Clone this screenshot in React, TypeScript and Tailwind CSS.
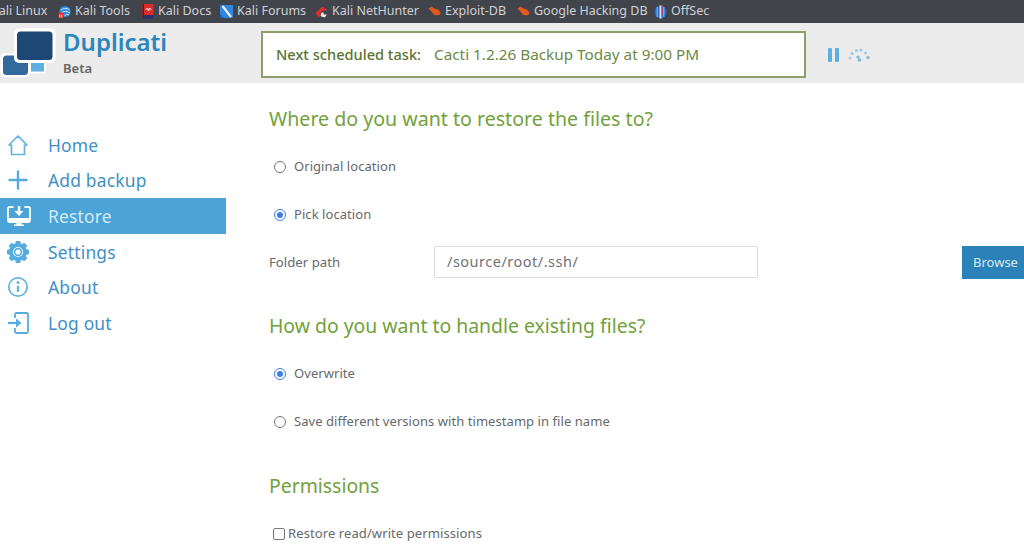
import type { ReactNode } from 'react';

const fontStack = "font-['Noto_Sans','Open_Sans',sans-serif]";

function KaliToolsIcon() {
  return (
    <svg width="14" height="14" viewBox="0 0 14 14">
      <circle cx="7.5" cy="6.5" r="6" fill="#2f8be0" />
      <path d="M3 5 Q7 1.5 12.5 4.5 M3.5 8 Q8 4.5 13 8 M7 11 Q9 8.5 12 10" stroke="#d5e6f7" strokeWidth="1" fill="none" />
      <rect x="0.5" y="7.5" width="5.5" height="6" rx="1" fill="#e0342f" />
      <path d="M2 13 V10 M4 13 V10" stroke="#fff" strokeWidth="0.7" />
    </svg>
  );
}

function KaliDocsIcon() {
  return (
    <svg width="12" height="15" viewBox="0 0 12 15">
      <rect x="0.5" y="0" width="11" height="14" rx="1" fill="#d92b2b" />
      <rect x="0.5" y="11" width="11" height="3.5" fill="#27306a" />
      <rect x="0.5" y="0" width="1.5" height="14" fill="#7a1414" />
      <path d="M3.5 6 L5.5 4 L6.5 7 L7.5 4 L9.5 6" stroke="#fff" strokeWidth="0.9" fill="none" />
    </svg>
  );
}

function KaliForumsIcon() {
  return (
    <svg width="13" height="13" viewBox="0 0 13 13">
      <rect width="13" height="13" rx="1" fill="#2f86e0" />
      <path d="M2.5 1 L11 12" stroke="#eef0f2" strokeWidth="2.2" />
      <path d="M0 9 L4 13 H0 Z" fill="#1c5fb0" />
    </svg>
  );
}

function NetHunterIcon() {
  return (
    <svg width="14" height="14" viewBox="0 0 14 14">
      <path d="M0.5 8 L8 1 L13.5 5 L9 5.5 Q5 7 6 11 L4 13 Z" fill="#d92f33" />
      <path d="M6 11 Q7 13 11 12.5 L13 9.5 Q9 11 9 7.5 L7 7.5 Z" fill="#e8e8e8" />
    </svg>
  );
}

function ExploitIcon() {
  return (
    <svg width="13" height="11" viewBox="0 0 13 11">
      <path d="M0.5 2.5 L3.5 0.5 L6.5 2.5 L10 3.5 L12.5 6.5 L12 8.5 L9 9.5 L5.5 8.5 L3.5 5.5 Z" fill="#e2591f" />
    </svg>
  );
}

function OffSecIcon() {
  return (
    <svg width="13" height="14" viewBox="0 0 13 14">
      <ellipse cx="6.5" cy="7" rx="6" ry="6.5" fill="#2b62c4" />
      <path d="M5.5 0.5 H7.5 V13.5 H5.5 Z" fill="#dfe3ec" />
      <path d="M2.5 2 H4 V12 H2.5 Z M9 2 H10.5 V12 H9 Z" fill="#57b0e8" />
      <path d="M7.5 0.5 H9 V9 L7.5 11 Z" fill="#9a4a8f" />
    </svg>
  );
}

function BookmarkItem({ icon, label, className }: { icon?: ReactNode; label: string; className: string }) {
  return (
    <div className={`flex items-center gap-[4px] shrink-0 ${className}`}>
      {icon && <span className="w-[13px] flex items-center justify-center">{icon}</span>}
      <span>{label}</span>
    </div>
  );
}

function DuplicatiLogo() {
  return (
    <svg width="56" height="56" viewBox="0 0 56 56" className="block">
      <rect x="0.5" y="30" width="30" height="24" rx="5" fill="#fff" />
      <rect x="3" y="32.5" width="25" height="19.5" rx="3.5" fill="#336a9e" />
      <rect x="29" y="38" width="17" height="12.5" rx="2" fill="#fff" />
      <rect x="31" y="40" width="13" height="8.5" fill="#5fb0e0" />
      <rect x="14" y="5.5" width="41.5" height="34.5" rx="5" fill="#fff" />
      <rect x="17" y="8.5" width="35.5" height="28.5" rx="3.5" fill="#1d4775" />
    </svg>
  );
}

function HomeIcon() {
  return (
    <svg width="24" height="24" viewBox="0 0 24 24" fill="none">
      <path d="M3 12 L12 3 L21 12 H18.5 V21.5 H5.5 V12 Z" stroke="#63b2e0" strokeWidth="1.7" strokeLinejoin="round" />
    </svg>
  );
}

function AddIcon() {
  return (
    <svg width="24" height="24" viewBox="0 0 24 24" fill="none">
      <path d="M12 3.5 V20.5 M3.5 12 H20.5" stroke="#56acdf" strokeWidth="2.4" strokeLinecap="round" />
    </svg>
  );
}

function RestoreIcon() {
  return (
    <svg width="26" height="26" viewBox="0 0 26 26" fill="none">
      <path d="M7.5 4 H3.5 A1.5 1.5 0 0 0 2 5.5 V17.5 A1.5 1.5 0 0 0 3.5 19 H22.5 A1.5 1.5 0 0 0 24 17.5 V5.5 A1.5 1.5 0 0 0 22.5 4 H18.5" stroke="#fff" strokeWidth="1.8" />
      <path d="M2.5 15 H23.5 V18.5 H2.5 Z" fill="#fff" />
      <path d="M13 3 V11" stroke="#fff" strokeWidth="2.4" />
      <path d="M8.5 8 H17.5 L13 13 Z" fill="#fff" />
      <path d="M10.5 19 H15.5 V21.5 H18 V23 H8 V21.5 H10.5 Z" fill="#fff" />
    </svg>
  );
}

function GearIcon() {
  return (
    <svg width="24" height="24" viewBox="0 0 24 24">
      <g fill="#56acdf">
        {[0, 45, 90, 135, 180, 225, 270, 315].map((a) => (
          <rect key={a} x="9.5" y="1" width="5" height="5" rx="1" transform={`rotate(${a} 12 12)`} />
        ))}
      </g>
      <circle cx="12" cy="12" r="7" fill="none" stroke="#56acdf" strokeWidth="4" />
      <circle cx="12" cy="12" r="3.4" fill="none" stroke="#56acdf" strokeWidth="1.6" />
    </svg>
  );
}

function InfoIcon() {
  return (
    <svg width="24" height="24" viewBox="0 0 24 24" fill="none">
      <circle cx="12" cy="12" r="9.2" stroke="#63b2e0" strokeWidth="1.7" />
      <circle cx="12" cy="7.6" r="1.5" fill="#63b2e0" />
      <path d="M12 10.8 V17" stroke="#63b2e0" strokeWidth="2.3" />
    </svg>
  );
}

function LogOutIcon() {
  return (
    <svg width="24" height="24" viewBox="0 0 24 24" fill="none">
      <path d="M9 7 V3.5 A1.5 1.5 0 0 1 10.5 2 H20.5 A1.5 1.5 0 0 1 22 3.5 V20.5 A1.5 1.5 0 0 1 20.5 22 H10.5 A1.5 1.5 0 0 1 9 20.5 V17" stroke="#56acdf" strokeWidth="1.8" />
      <path d="M2 12 H11" stroke="#56acdf" strokeWidth="2.2" />
      <path d="M10 7.5 L15.5 12 L10 16.5 Z" fill="#56acdf" />
    </svg>
  );
}

function SpinnerDots() {
  const dots = [
    [3, 11, 1.6, 0.45],
    [5, 6.5, 1.6, 0.5],
    [9.5, 3.5, 1.5, 0.55],
    [14, 3, 1.5, 0.55],
    [18.5, 6, 1.5, 0.5],
    [21, 10.5, 1.7, 0.7],
    [11, 10, 1.6, 0.8],
    [12.5, 13, 1.8, 0.8],
  ];
  return (
    <svg width="24" height="16" viewBox="0 0 24 16">
      {dots.map(([cx, cy, r, o], i) => (
        <circle key={i} cx={cx} cy={cy} r={r} fill="#5fa9d8" opacity={o} />
      ))}
    </svg>
  );
}

function NavItem({ icon, label, active }: { icon: ReactNode; label: string; active?: boolean }) {
  return (
    <div className={`flex items-center h-[35.6px] ${active ? 'bg-[#4ba3d8] text-[#d4ebf7]' : 'text-[#3f8fc4]'}`}>
      <span className="w-[48px] pl-[6px] flex items-center shrink-0">{icon}</span>
      <span className="text-[17.4px] tracking-[0.2px]">{label}</span>
    </div>
  );
}

function Radio({ label, checked, className }: { label: string; checked?: boolean; className: string }) {
  return (
    <div className={`flex items-center text-[13px] tracking-[0.06px] text-[#66696c] ${className}`}>
      <span className={`w-[12px] h-[12px] rounded-full mr-[8px] ml-[5px] border-[1.8px] bg-white flex items-center justify-center ${checked ? 'border-[#3f7fe0]' : 'border-[#767681]'}`}>
        {checked && <span className="w-[6px] h-[6px] rounded-full bg-[#3f7fe0]" />}
      </span>
      {label}
    </div>
  );
}

export default function App() {
  return (
    <div className={`w-[1024px] h-[553px] overflow-hidden bg-white ${fontStack}`}>
      {/* browser bookmarks */}
      <div className="h-[23px] bg-[#42444c] text-[#d0d1d4] text-[12.5px] flex items-center overflow-hidden">
        <BookmarkItem label="Kali Linux" className="-ml-[9px] w-[67px]" />
        <BookmarkItem icon={<KaliToolsIcon />} label="Kali Tools" className="w-[83px]" />
        <BookmarkItem icon={<KaliDocsIcon />} label="Kali Docs" className="w-[79px]" />
        <BookmarkItem icon={<KaliForumsIcon />} label="Kali Forums" className="w-[95px]" />
        <BookmarkItem icon={<NetHunterIcon />} label="Kali NetHunter" className="w-[113px]" />
        <BookmarkItem icon={<ExploitIcon />} label="Exploit-DB" className="w-[89px]" />
        <BookmarkItem icon={<ExploitIcon />} label="Google Hacking DB" className="w-[137px]" />
        <BookmarkItem icon={<OffSecIcon />} label="OffSec" className="w-[60px]" />
      </div>

      {/* header */}
      <div className="h-[60px] bg-[#ececec] flex">
        <div className="w-[56px] shrink-0">
          <DuplicatiLogo />
        </div>
        <div className="w-[205px] pl-[7px] pt-[5px] shrink-0">
          <div className="text-[24px] leading-[27px] font-semibold text-[#2b86bb]">Duplicati</div>
          <div className="text-[13px] leading-[16px] mt-[5px] font-semibold text-[#666]">Beta</div>
        </div>
        <div className="w-[545px] h-[47px] mt-[8px] border-2 border-[#8b9e6c] bg-white flex items-center pl-[13px] shrink-0">
          <span className="text-[14.6px] text-[#5a7332] font-medium">Next scheduled task:</span>
          <span className="text-[15.3px] text-[#6b8a44] ml-[13px]">Cacti 1.2.26 Backup Today at 9:00 PM</span>
        </div>
        <div className="flex items-center ml-[22px] gap-[8px] mt-[3px]">
          <div className="flex gap-[3px]">
            <span className="w-[4px] h-[14px] rounded-[1px] bg-[#5cb0e2]" />
            <span className="w-[4px] h-[14px] rounded-[1px] bg-[#5cb0e2]" />
          </div>
          <SpinnerDots />
        </div>
      </div>

      <div className="flex">
        {/* sidebar */}
        <div className="w-[226px] pt-[44px] shrink-0">
          <NavItem icon={<HomeIcon />} label="Home" />
          <NavItem icon={<AddIcon />} label="Add backup" />
          <NavItem icon={<RestoreIcon />} label="Restore" active />
          <NavItem icon={<GearIcon />} label="Settings" />
          <NavItem icon={<InfoIcon />} label="About" />
          <NavItem icon={<LogOutIcon />} label="Log out" />
        </div>

        {/* restore form */}
        <div className="flex-1 pl-[43px]">
          <h2 className="mt-[22px] text-[19.6px] leading-[28px] text-[#72a13c]">Where do you want to restore the files to?</h2>
          <Radio label="Original location" className="mt-[24px] h-[20px]" />
          <Radio label="Pick location" checked className="mt-[28px] h-[20px]" />
          <div className="flex items-center mt-[21px]">
            <span className="w-[165px] text-[13.2px] text-[#66696c] shrink-0">Folder path</span>
            <div className="w-[324px] h-[32px] -mt-[1px] border border-[#dcdcdc] rounded-[2px] flex items-center pl-[12px] text-[14.5px] tracking-[0.5px] text-[#6f7275] shrink-0">
              /source/root/.ssh/
            </div>
            <div className="ml-auto w-[62px] h-[33px] bg-[#2b82b8] text-[#d8e8f2] text-[13px] pl-[11px] flex items-center">Browse</div>
          </div>
          <h2 className="mt-[33px] text-[19.4px] leading-[28px] text-[#72a13c]">How do you want to handle existing files?</h2>
          <Radio label="Overwrite" checked className="mt-[24px] h-[20px]" />
          <Radio label="Save different versions with timestamp in file name" className="mt-[28px] h-[20px]" />
          <h2 className="mt-[40px] text-[19.4px] leading-[28px] text-[#72a13c]">Permissions</h2>
          <div className="flex items-center mt-[24px] pl-[4px] h-[20px] text-[13.1px] tracking-[0.05px] text-[#66696c]">
            <span className="w-[12px] h-[12px] rounded-[2px] border-[1.8px] border-[#767681] mr-[3px]" />
            Restore read/write permissions
          </div>
        </div>
      </div>
    </div>
  );
}
